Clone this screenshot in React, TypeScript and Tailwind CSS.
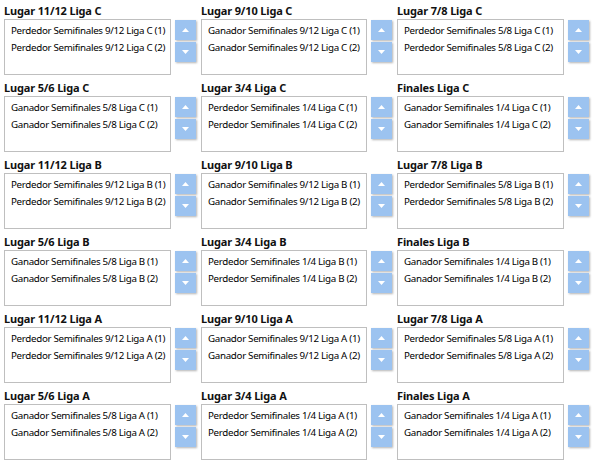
import React from "react";

type Slot = {
    title: string;
    items: string[];
};

const ligas = ["C", "B", "A"];

// Two rows of three panels per liga
const buildSlots = (liga: string): Slot[][] => [
    [
        {
            title: `Lugar 11/12 Liga ${liga}`,
            items: [`Perdedor Semifinales 9/12 Liga ${liga} (1)`, `Perdedor Semifinales 9/12 Liga ${liga} (2)`],
        },
        {
            title: `Lugar 9/10 Liga ${liga}`,
            items: [`Ganador Semifinales 9/12 Liga ${liga} (1)`, `Ganador Semifinales 9/12 Liga ${liga} (2)`],
        },
        {
            title: `Lugar 7/8 Liga ${liga}`,
            items: [`Perdedor Semifinales 5/8 Liga ${liga} (1)`, `Perdedor Semifinales 5/8 Liga ${liga} (2)`],
        },
    ],
    [
        {
            title: `Lugar 5/6 Liga ${liga}`,
            items: [`Ganador Semifinales 5/8 Liga ${liga} (1)`, `Ganador Semifinales 5/8 Liga ${liga} (2)`],
        },
        {
            title: `Lugar 3/4 Liga ${liga}`,
            items: [`Perdedor Semifinales 1/4 Liga ${liga} (1)`, `Perdedor Semifinales 1/4 Liga ${liga} (2)`],
        },
        {
            title: `Finales Liga ${liga}`,
            items: [`Ganador Semifinales 1/4 Liga ${liga} (1)`, `Ganador Semifinales 1/4 Liga ${liga} (2)`],
        },
    ],
];

function ArrowButton({ up }: { up?: boolean }) {
    return (
        <button
            className="w-[21px] h-[20px] bg-[#9cc3f0] shadow-[1px_1px_2px_rgba(0,0,0,0.3)] flex items-center justify-center"
            aria-label={up ? "Subir" : "Bajar"}
        >
            <svg width="7" height="4" viewBox="0 0 7 4">
                {up ? <polygon points="3.5,0 7,4 0,4" fill="#ffffff" /> : <polygon points="0,0 7,0 3.5,4" fill="#ffffff" />}
            </svg>
        </button>
    );
}

function SlotPanel({ slot }: { slot: Slot }) {
    return (
        <div className="flex flex-col min-w-0 font-['Noto_Sans',sans-serif]">
            <div className="h-[19px] pt-[4px] text-[11px] leading-[14px] font-bold tracking-[-0.15px] text-[#111]">
                {slot.title}
            </div>
            <div className="flex gap-[4px]">
                <div className="flex-1 min-w-0 overflow-hidden h-[56px] border border-[#bfbfbf] bg-white pt-[2px] pl-[6px]">
                    {slot.items.map((item) => (
                        <div key={item} className="h-[17px] leading-[17px] text-[9.75px] tracking-[-0.3px] text-black whitespace-nowrap">
                            {item}
                        </div>
                    ))}
                </div>
                <div className="flex flex-col gap-[2px] pt-[1px]">
                    <ArrowButton up />
                    <ArrowButton />
                </div>
            </div>
        </div>
    );
}

export default function App() {
    return (
        <main className="w-[596px] h-[466px] bg-white px-[4px] overflow-hidden">
            <div className="grid grid-cols-[192px_191px_192px] gap-x-[5px] gap-y-[2px]">
                {ligas.flatMap((liga) =>
                    buildSlots(liga).flatMap((row) =>
                        row.map((slot) => <SlotPanel key={slot.title} slot={slot} />)
                    )
                )}
            </div>
        </main>
    );
}
